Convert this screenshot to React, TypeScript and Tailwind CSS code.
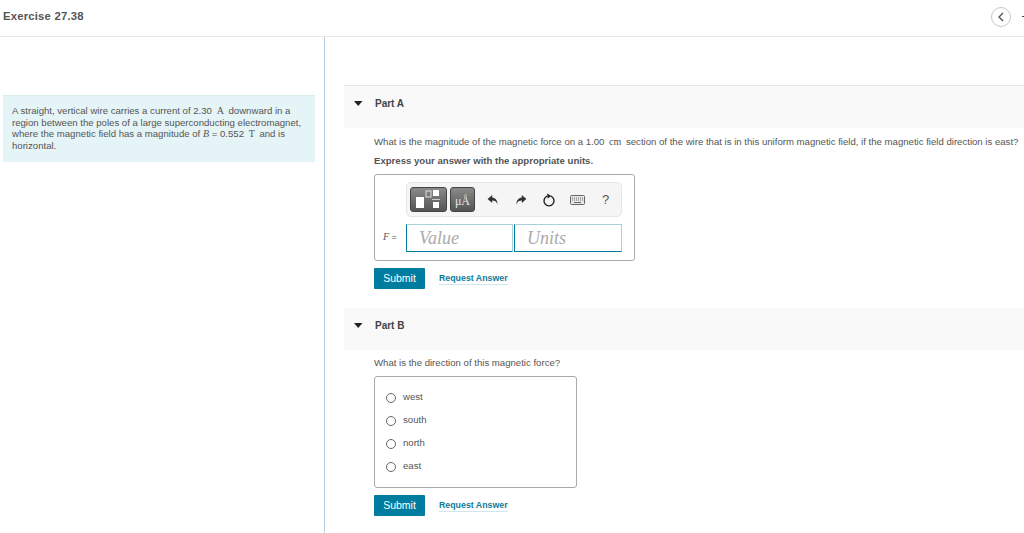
import { useState } from 'react';

const sans = { fontFamily: '"Liberation Sans", Arial, sans-serif' };

const Unit = ({ children }: { children: React.ReactNode }) => (
  <span className="mx-[2px] font-['Liberation_Serif',serif] text-[10px] leading-none">{children}</span>
);

const Var = ({ children }: { children: React.ReactNode }) => (
  <i className="font-['Liberation_Serif',serif] text-[10px] leading-none">{children}</i>
);

const PartHeader = ({ title }: { title: string }) => (
  <div className="flex h-[42px] items-start bg-[#f9f9f9]">
    <svg className="ml-[10px] mt-[15px] h-[5px] w-[9px]" viewBox="0 0 9 5">
      <path d="M0 0h8.5L4.2 5z" fill="#222" />
    </svg>
    <span className="ml-3 mt-[11px] text-[10px] font-bold leading-[13px] text-[#444]">{title}</span>
  </div>
);

const Actions = () => (
  <div className="flex items-center">
    <button className="h-[21px] w-[51px] rounded-[1px] bg-[#007c9f] text-[10.5px] text-white">Submit</button>
    <a className="ml-[14px] border-b border-[#cfe6ec] text-[8.8px] font-bold leading-[11px] text-[#0e7c9c]">Request Answer</a>
  </div>
);

const Toolbar = () => (
  <div className="flex h-[35px] w-[216px] items-center rounded-[5px] border border-[#e6e6e6] bg-[#f5f5f5] pl-[3px]">
    <div className="relative h-[25px] w-[37px] rounded-[3px] border border-[#444] bg-gradient-to-b from-[#8a8a8a] to-[#555]">
      <svg className="absolute inset-0" width="35" height="23" viewBox="0 0 35 23">
        <rect x="5" y="9" width="8" height="11" fill="#fff" />
        <rect x="15" y="3" width="5" height="6" fill="none" stroke="#ddd" />
        <rect x="22" y="2" width="6" height="6" fill="#fff" />
        <rect x="21" y="11" width="8" height="1" fill="#ccc" />
        <rect x="22" y="14" width="6" height="6" fill="#fff" />
      </svg>
    </div>
    <div className="relative ml-[3px] flex h-[25px] w-[25px] items-center justify-center rounded-[3px] border border-[#444] bg-gradient-to-b from-[#8a8a8a] to-[#555] font-['Liberation_Serif',serif] text-[12px] leading-none text-[#e8e8e8]">
      <span className="mt-[3px]">μÅ</span>
    </div>
    <svg className="ml-[12px]" width="12" height="12" viewBox="0 0 12 12">
      <path d="M5.2 1 .6 5l4.6 4V6.6c2.6 0 4.4.9 5.2 3.9.3-3.6-1.6-6.5-5.2-6.9z" fill="#333" />
    </svg>
    <svg className="ml-[16px]" width="12" height="12" viewBox="0 0 12 12">
      <path d="M6.8 1l4.6 4-4.6 4V6.6c-2.6 0-4.4.9-5.2 3.9-.3-3.6 1.6-6.5 5.2-6.9z" fill="#333" />
    </svg>
    <svg className="ml-[15px]" width="14" height="14" viewBox="0 0 14 14">
      <path d="M8.8 3.2a5 5 0 1 1-3.6 0" fill="none" stroke="#222" strokeWidth="1.4" />
      <path d="M5 .6 9.4 3 5.6 5.6z" fill="#222" />
    </svg>
    <svg className="ml-[14px]" width="15" height="10" viewBox="0 0 15 10">
      <rect x=".5" y=".5" width="14" height="9" rx="1" fill="#e8e8e8" stroke="#666" />
      <path d="M2 3h11M2 5h11" stroke="#666" strokeDasharray="1 1" />
      <path d="M4 7.5h7" stroke="#666" />
    </svg>
    <span className="ml-[17px] text-[13px] leading-none text-[#555]">?</span>
  </div>
);

const AnswerInput = ({ placeholder, width }: { placeholder: string; width: string }) => (
  <div className={`${width} flex h-[28px] items-center border border-[#a9d3da] border-b-[#007c9f] border-l-[#007c9f] pl-[12px] font-['Liberation_Serif',serif] text-[18px] italic leading-none text-[#aaa]`}>
    {placeholder}
  </div>
);

const options = ['west', 'south', 'north', 'east'];

export default function App() {
  const [picked] = useState<string | null>(null);

  return (
    <div className="h-[533px] w-[1024px] overflow-hidden bg-white text-[#444]" style={sans}>
      <header className="flex h-[37px] items-center justify-between border-b border-[#e8e8e8]">
        <h1 className="ml-[3px] mt-[-4px] text-[11.3px] font-bold tracking-[0.2px] text-[#555]">Exercise 27.38</h1>
        <div className="mt-[-3px] flex items-center">
          <button className="flex h-[20px] w-[20px] items-center justify-center rounded-full border border-[#c8c8c8]">
            <svg width="8" height="10" viewBox="0 0 8 10">
              <path d="M6 1 2 5l4 4" fill="none" stroke="#555" strokeWidth="1.4" />
            </svg>
          </button>
          <span className="ml-[11px] h-[1px] w-[2px] bg-[#444]" />
        </div>
      </header>

      <div className="flex h-[496px]">
        <aside className="w-[325px] shrink-0 border-r border-[#b4cfe0] pl-[3px] pt-[58px]">
          <div className="h-[67px] w-[312px] border-t border-[#dcecee] bg-[#e5f4f6] px-[9px] pt-[9px] text-[9.6px] leading-[11.6px] text-[#555]">
            A straight, vertical wire carries a current of 2.30 <Unit>A</Unit> downward in a region between the poles of a large superconducting electromagnet, where the magnetic field has a magnitude of <Var>B</Var> = 0.552 <Unit>T</Unit> and is horizontal.
          </div>
        </aside>

        <main className="min-w-0 flex-1 pl-[19px] pt-[48px]">
          <div className="border-t border-[#e6e6e6]">
            <PartHeader title="Part A" />
          </div>
          <div className="pl-[30px]">
            <p className="mt-[7px] whitespace-nowrap text-[9.6px] leading-[13px] text-[#555]">
              What is the magnitude of the magnetic force on a 1.00 <Unit>cm</Unit> section of the wire that is in this uniform magnetic field, if the magnetic field direction is east?
            </p>
            <p className="mt-[6px] text-[9.6px] font-bold leading-[13px] text-[#555]">Express your answer with the appropriate units.</p>
            <div className="mt-[7px] h-[87px] w-[261px] rounded-[3px] border border-[#aaa] pl-[31px] pt-[7px]">
              <Toolbar />
              <div className="relative mt-[7px] flex gap-[1px]">
                <span className="absolute left-[-23px] top-[8px] text-[9px] leading-[11px] text-[#555]">
                  <Var>F</Var> =
                </span>
                <AnswerInput placeholder="Value" width="w-[107px]" />
                <AnswerInput placeholder="Units" width="w-[108px]" />
              </div>
            </div>
            <div className="mt-[7px]">
              <Actions />
            </div>
          </div>

          <div className="mt-[19px]">
            <PartHeader title="Part B" />
          </div>
          <div className="pl-[30px]">
            <p className="mt-[6px] text-[9.6px] leading-[13px] text-[#555]">What is the direction of this magnetic force?</p>
            <div className="mt-[7px] h-[112px] w-[203px] rounded-[3px] border border-[#aaa] pl-[11px] pt-[9px]">
              {options.map((opt) => (
                <label key={opt} className="flex h-[23px] items-center">
                  <span className={`h-[10px] w-[10px] rounded-full border border-[#666] ${picked === opt ? 'bg-[#007c9f]' : ''}`} />
                  <span className="ml-[7px] text-[9.6px] text-[#555]">{opt}</span>
                </label>
              ))}
            </div>
            <div className="mt-[7px]">
              <Actions />
            </div>
          </div>
        </main>
      </div>
    </div>
  );
}
